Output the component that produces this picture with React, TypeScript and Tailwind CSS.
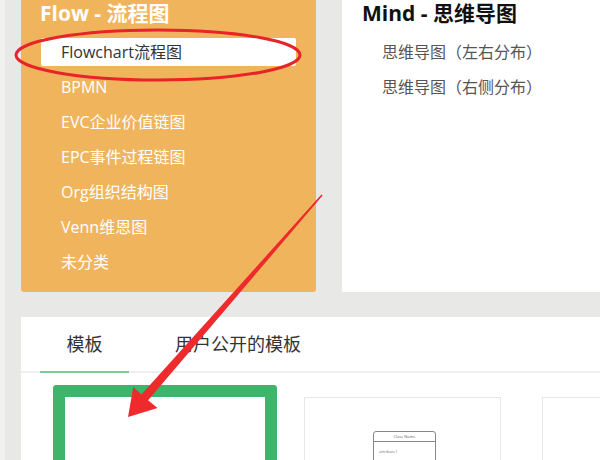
import React from 'react';

const flowItems = ['BPMN', 'EVC企业价值链图', 'EPC事件过程链图', 'Org组织结构图', 'Venn维恩图', '未分类'];
const mindItems = ['思维导图（左右分布）', '思维导图（右侧分布）'];

const font = { fontFamily: '"Open Sans", "Noto Sans CJK SC", sans-serif' };

function Annotations() {
  return (
    <svg className="absolute inset-0 pointer-events-none" width="600" height="460" viewBox="0 0 600 460">
      <ellipse cx="158" cy="55" rx="142" ry="25" fill="none" stroke="#e8232a" strokeWidth="3" />
      <polygon
        fill="#ee2a2c"
        points="322.6,195.5 148.1,400.3 157.5,408 128,417 133.3,387 141.4,394.6 321.4,194.5"
      />
    </svg>
  );
}

export default function App() {
  return (
    <div className="relative w-[600px] h-[460px] overflow-hidden bg-[#e8e8e6] border-l-[5px] border-[#f1f1f0]" style={font}>
      <div className="pl-[16px] flex flex-col h-full">
        <div className="flex shrink-0 gap-[26px] h-[292px]">
          {/* Flow panel */}
          <div className="w-[295px] shrink-0 bg-[#f0b55c] rounded-b-[3px]">
            <h2 className="pl-[19px] pt-[1px] text-[21px] leading-[24px] font-bold text-white">Flow - 流程图</h2>
            <ul className="mt-[9px]">
              <li className="h-[35px] flex items-center pl-[20px] pr-[20px]">
                <div className="w-full h-[28px] bg-white rounded-[2px] flex items-center pl-[20px] text-[16px] text-[#333]">
                  Flowchart流程图
                </div>
              </li>
              {flowItems.map(item => (
                <li key={item} className="h-[35px] flex items-center pl-[40px] text-[16px] text-white">
                  {item}
                </li>
              ))}
            </ul>
          </div>

          {/* Mind panel */}
          <div className="flex-1 bg-white">
            <h2 className="pl-[20px] pt-[1px] text-[21px] leading-[24px] font-bold text-[#111]">Mind - 思维导图</h2>
            <ul className="mt-[9px]">
              {mindItems.map(item => (
                <li key={item} className="h-[35px] flex items-center pl-[40px] text-[16px] text-[#555]">
                  {item}
                </li>
              ))}
            </ul>
          </div>
        </div>

        {/* Templates */}
        <div className="mt-[25px] flex-1 min-h-0 overflow-hidden bg-white">
          <div className="flex h-[56px] border-b-2 border-[#efefef]">
            <div className="relative w-[89px] ml-[19px] flex items-center justify-center text-[18px] text-[#333]">
              模板
              <span className="absolute left-0 right-0 -bottom-[2px] h-[2px] bg-[#7dcc98]" />
            </div>
            <div className="ml-[46px] flex items-center text-[18px] text-[#333]">用户公开的模板</div>
          </div>
          <div className="flex items-start pl-[32px] pt-[12px]">
            <div className="w-[224px] shrink-0 h-[80px] border-[12px] border-b-0 border-[#3fb46b] rounded-t-[4px] bg-white" />
            <div className="ml-[27px] shrink-0 mt-[12px] w-[197px] h-[70px] border border-b-0 border-[#e6e6e6] flex justify-center">
              <div className="mt-[33px] ml-[4px] w-[63px] h-[40px] border border-[#888] rounded-t-[3px]">
                <div className="h-[10px] border-b border-[#888] flex items-center justify-center text-[4px] text-[#666]">Class Name</div>
                <div className="pl-[5px] pt-[7px] text-[4px] text-[#777]">attribute1</div>
              </div>
            </div>
            <div className="ml-[41px] shrink-0 mt-[12px] w-[80px] h-[70px] border border-b-0 border-r-0 border-[#e6e6e6]" />
          </div>
        </div>
      </div>
      <div className="absolute -left-[5px] top-0">
        <Annotations />
      </div>
    </div>
  );
}
